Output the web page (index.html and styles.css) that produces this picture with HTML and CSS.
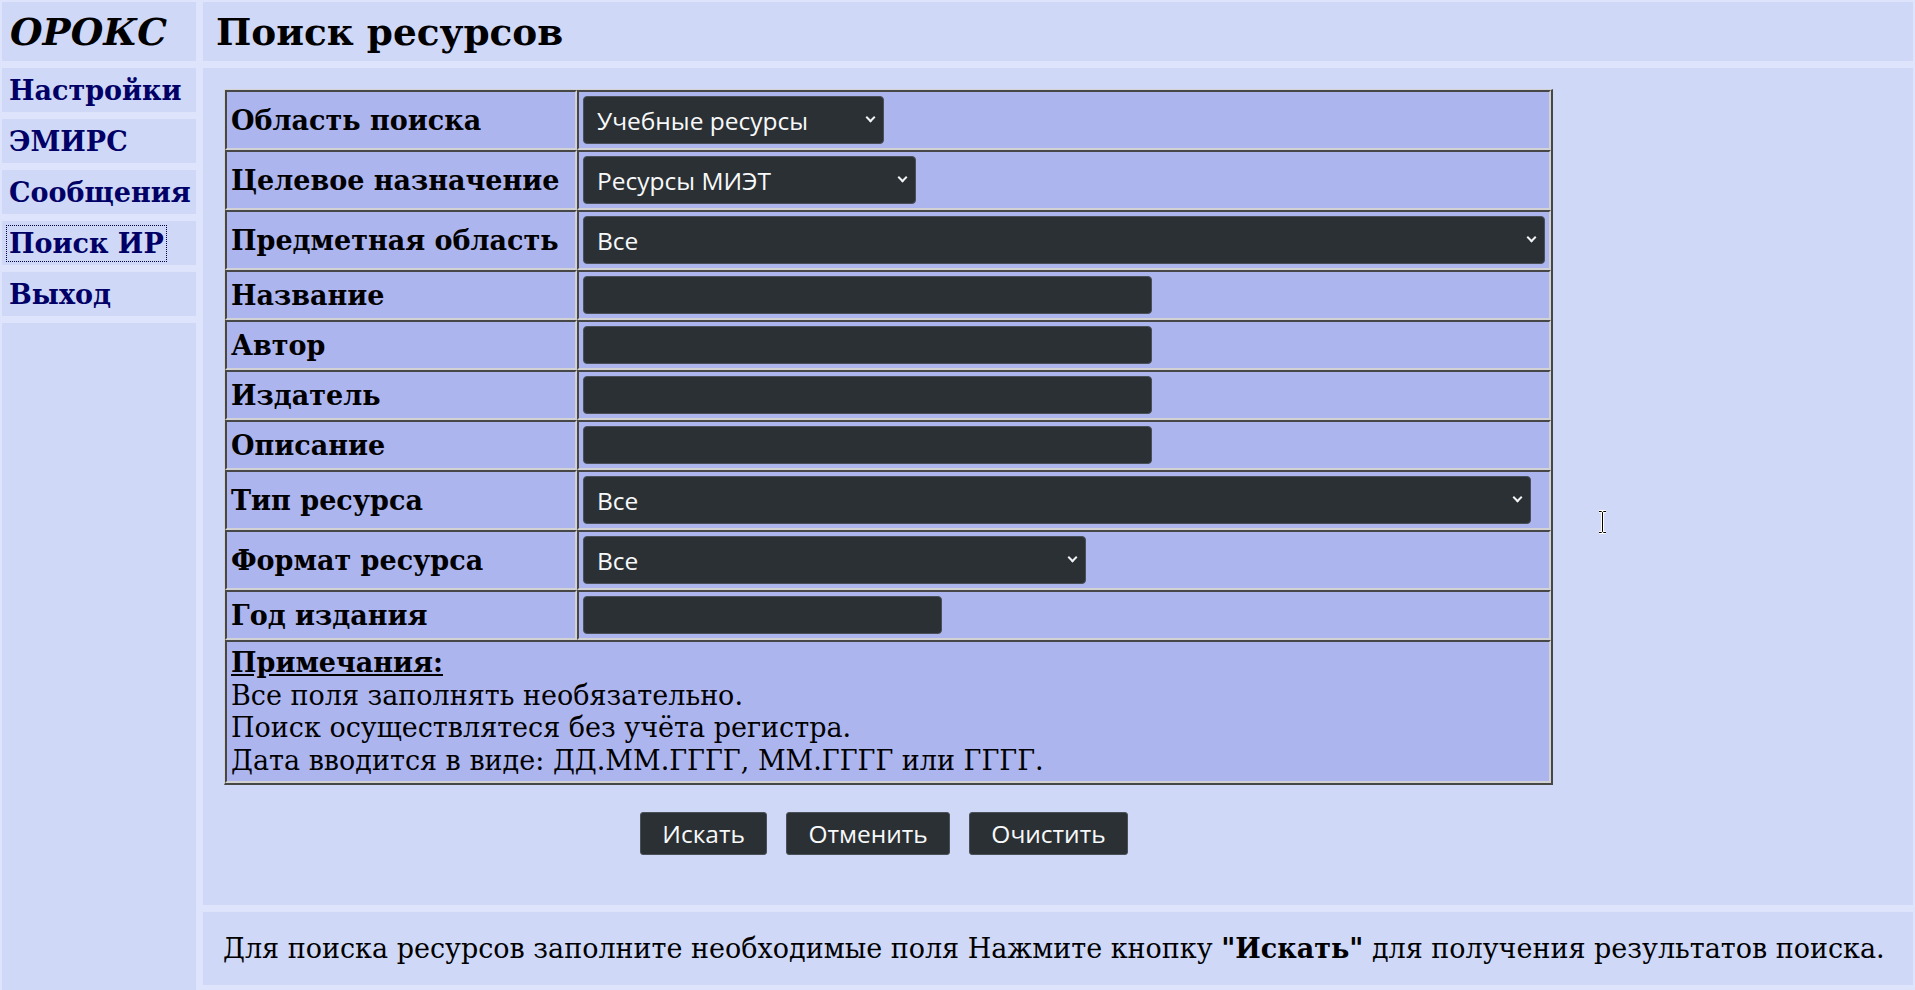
FILE: index.html
```html
<!DOCTYPE html>
<html lang="ru">
<head>
<meta charset="utf-8">
<title>Поиск ресурсов</title>
<link rel="stylesheet" href="styles.css">
</head>
<body>
<div class="page">
  <aside class="sidebar">
    <div class="cell logo">ОРОКС</div>
    <a class="cell nav" href="#">Настройки</a>
    <a class="cell nav" href="#">ЭМИРС</a>
    <a class="cell nav" href="#">Сообщения</a>
    <a class="cell nav" href="#"><span class="focused">Поиск ИР</span></a>
    <a class="cell nav" href="#">Выход</a>
    <div class="cell filler"></div>
  </aside>
  <main class="main">
    <header class="cell title">Поиск ресурсов</header>
    <section class="cell content">
      <form class="search">
        <table class="grid">
          <tr>
            <td class="label">Область поиска</td>
            <td><span class="sel w-area"><select><option>Учебные ресурсы</option></select></span></td>
          </tr>
          <tr>
            <td class="label">Целевое назначение</td>
            <td><span class="sel w-target"><select><option>Ресурсы МИЭТ</option></select></span></td>
          </tr>
          <tr>
            <td class="label">Предметная область</td>
            <td><span class="sel w-full"><select><option>Все</option></select></span></td>
          </tr>
          <tr>
            <td class="label">Название</td>
            <td><input class="field w-text" type="text"></td>
          </tr>
          <tr>
            <td class="label">Автор</td>
            <td><input class="field w-text" type="text"></td>
          </tr>
          <tr>
            <td class="label">Издатель</td>
            <td><input class="field w-text" type="text"></td>
          </tr>
          <tr>
            <td class="label">Описание</td>
            <td><input class="field w-text" type="text"></td>
          </tr>
          <tr>
            <td class="label">Тип ресурса</td>
            <td><span class="sel w-type"><select><option>Все</option></select></span></td>
          </tr>
          <tr>
            <td class="label">Формат ресурса</td>
            <td><span class="sel w-format"><select><option>Все</option></select></span></td>
          </tr>
          <tr>
            <td class="label">Год издания</td>
            <td><input class="field w-year" type="text"></td>
          </tr>
          <tr>
            <td class="notes" colspan="2">
              <b class="notes-title">Примечания:</b><br>
              Все поля заполнять необязательно.<br>
              Поиск осуществлятеся без учёта регистра.<br>
              Дата вводится в виде: ДД.ММ.ГГГГ, ММ.ГГГГ или ГГГГ.
            </td>
          </tr>
        </table>
        <div class="buttons">
          <button class="btn" type="button">Искать</button>
          <button class="btn" type="button">Отменить</button>
          <button class="btn" type="button">Очистить</button>
        </div>
      </form>
    </section>
    <footer class="cell footer">
      <p>Для поиска ресурсов заполните необходимые поля Нажмите кнопку <b>"Искать"</b> для получения результатов поиска.</p>
    </footer>
  </main>
</div>
<span class="cursor" aria-hidden="true">
  <svg width="9" height="24" viewBox="0 0 9 24">
    <path d="M1 1.5h2.5l1 1 1-1H8M4.5 2.5v19M1 22.5h2.5l1-1 1 1H8" fill="none" stroke="#fff" stroke-width="3"/>
    <path d="M1 1.5h2.5l1 1 1-1H8M4.5 2.5v19M1 22.5h2.5l1-1 1 1H8" fill="none" stroke="#000" stroke-width="1"/>
  </svg>
</span>
</body>
</html>
```
FILE: styles.css
```css
html, body {
  margin: 0;
  padding: 0;
}

body {
  position: relative;
  background: #dee4fc;
  font-family: "DejaVu Serif", serif;
  font-size: 27px;
  color: #000;
  overflow: hidden;
}

.page {
  display: flex;
  align-items: stretch;
  gap: 7px;
  height: 990px;
  box-sizing: border-box;
  padding: 2px 2px 0;
}

.cell {
  background: #cfd8f7;
}

/* ---------- sidebar ---------- */
.sidebar {
  width: 194px;
  flex: none;
  display: flex;
  flex-direction: column;
  gap: 7px;
}

.logo {
  height: 59px;
  display: flex;
  align-items: center;
  padding-left: 8px;
  font-size: 37.4px;
  font-weight: bold;
  font-style: italic;
}

.nav {
  height: 44px;
  display: flex;
  align-items: center;
  padding-left: 7px;
  color: #000066;
  font-weight: bold;
  text-decoration: none;
}

.focused {
  outline: 1px dotted #000044;
  outline-offset: 2px;
}

.filler {
  flex: 1;
}

/* ---------- main column ---------- */
.main {
  flex: 1;
  display: flex;
  flex-direction: column;
  gap: 7px;
}

.title {
  height: 59px;
  display: flex;
  align-items: center;
  padding-left: 13px;
  font-size: 37.4px;
  font-weight: bold;
}

.content {
  height: 837px;
  box-sizing: border-box;
  padding: 21px;
}

.footer {
  height: 73px;
  display: flex;
  align-items: center;
  padding-left: 20px;
}

.footer p {
  margin: 0;
}

/* ---------- form table ---------- */
.search {
  width: 1329px;
}

.grid {
  box-sizing: border-box;
  width: 1329px;
  border-collapse: separate;
  border-spacing: 0;
  border-style: solid;
  border-width: 1px 2px 2px 1px;
  border-color: #d2d2d2 #474747 #474747 #d2d2d2;
}

.grid td {
  background: #acb5ee;
  padding: 4px;
  border-style: solid;
  border-width: 2px;
  border-color: #474747 #d2d2d2 #d2d2d2 #474747;
  vertical-align: middle;
}

.grid td.label {
  box-sizing: border-box;
  width: 352px;
  font-weight: bold;
  white-space: nowrap;
}

.grid td.notes {
  padding-top: 5px;
  line-height: 32.6px;
}

.notes-title {
  text-decoration: underline;
}

/* ---------- controls ---------- */
.sel {
  position: relative;
  display: inline-block;
  vertical-align: top;
}

.sel select,
.field,
.btn {
  box-sizing: border-box;
  margin: 0;
  background: #2b3035;
  color: #f8f9fa;
  border: 1px solid #495057;
  border-radius: 4px;
  font-family: "Open Sans", "Noto Sans", sans-serif;
  font-size: 24.5px;
}

.sel select {
  display: block;
  width: 100%;
  height: 48px;
  padding: 0 40px 0 13px;
  appearance: none;
  -webkit-appearance: none;
}

.sel::after {
  content: "";
  position: absolute;
  right: 10px;
  top: calc(50% - 6px);
  width: 5px;
  height: 5px;
  border-right: 2px solid #f1f3f5;
  border-bottom: 2px solid #f1f3f5;
  transform: rotate(45deg);
  pointer-events: none;
}

.w-area { width: 301px; }
.w-target { width: 333px; }
.w-full { width: 100%; }
.w-type { width: 948px; }
.w-format { width: 503px; }

.field {
  display: block;
  height: 38px;
  padding: 0 12px;
}

.w-text { width: 569px; }
.w-year { width: 359px; }

.buttons {
  display: flex;
  justify-content: center;
  gap: 19.5px;
  margin-top: 27px;
  padding-right: 9px;
}

.btn {
  height: 43px;
  padding: 0 21px;
  border-radius: 3px;
}

/* mouse pointer captured in the screenshot */
.cursor {
  position: absolute;
  left: 1598px;
  top: 510px;
  line-height: 0;
}
```
